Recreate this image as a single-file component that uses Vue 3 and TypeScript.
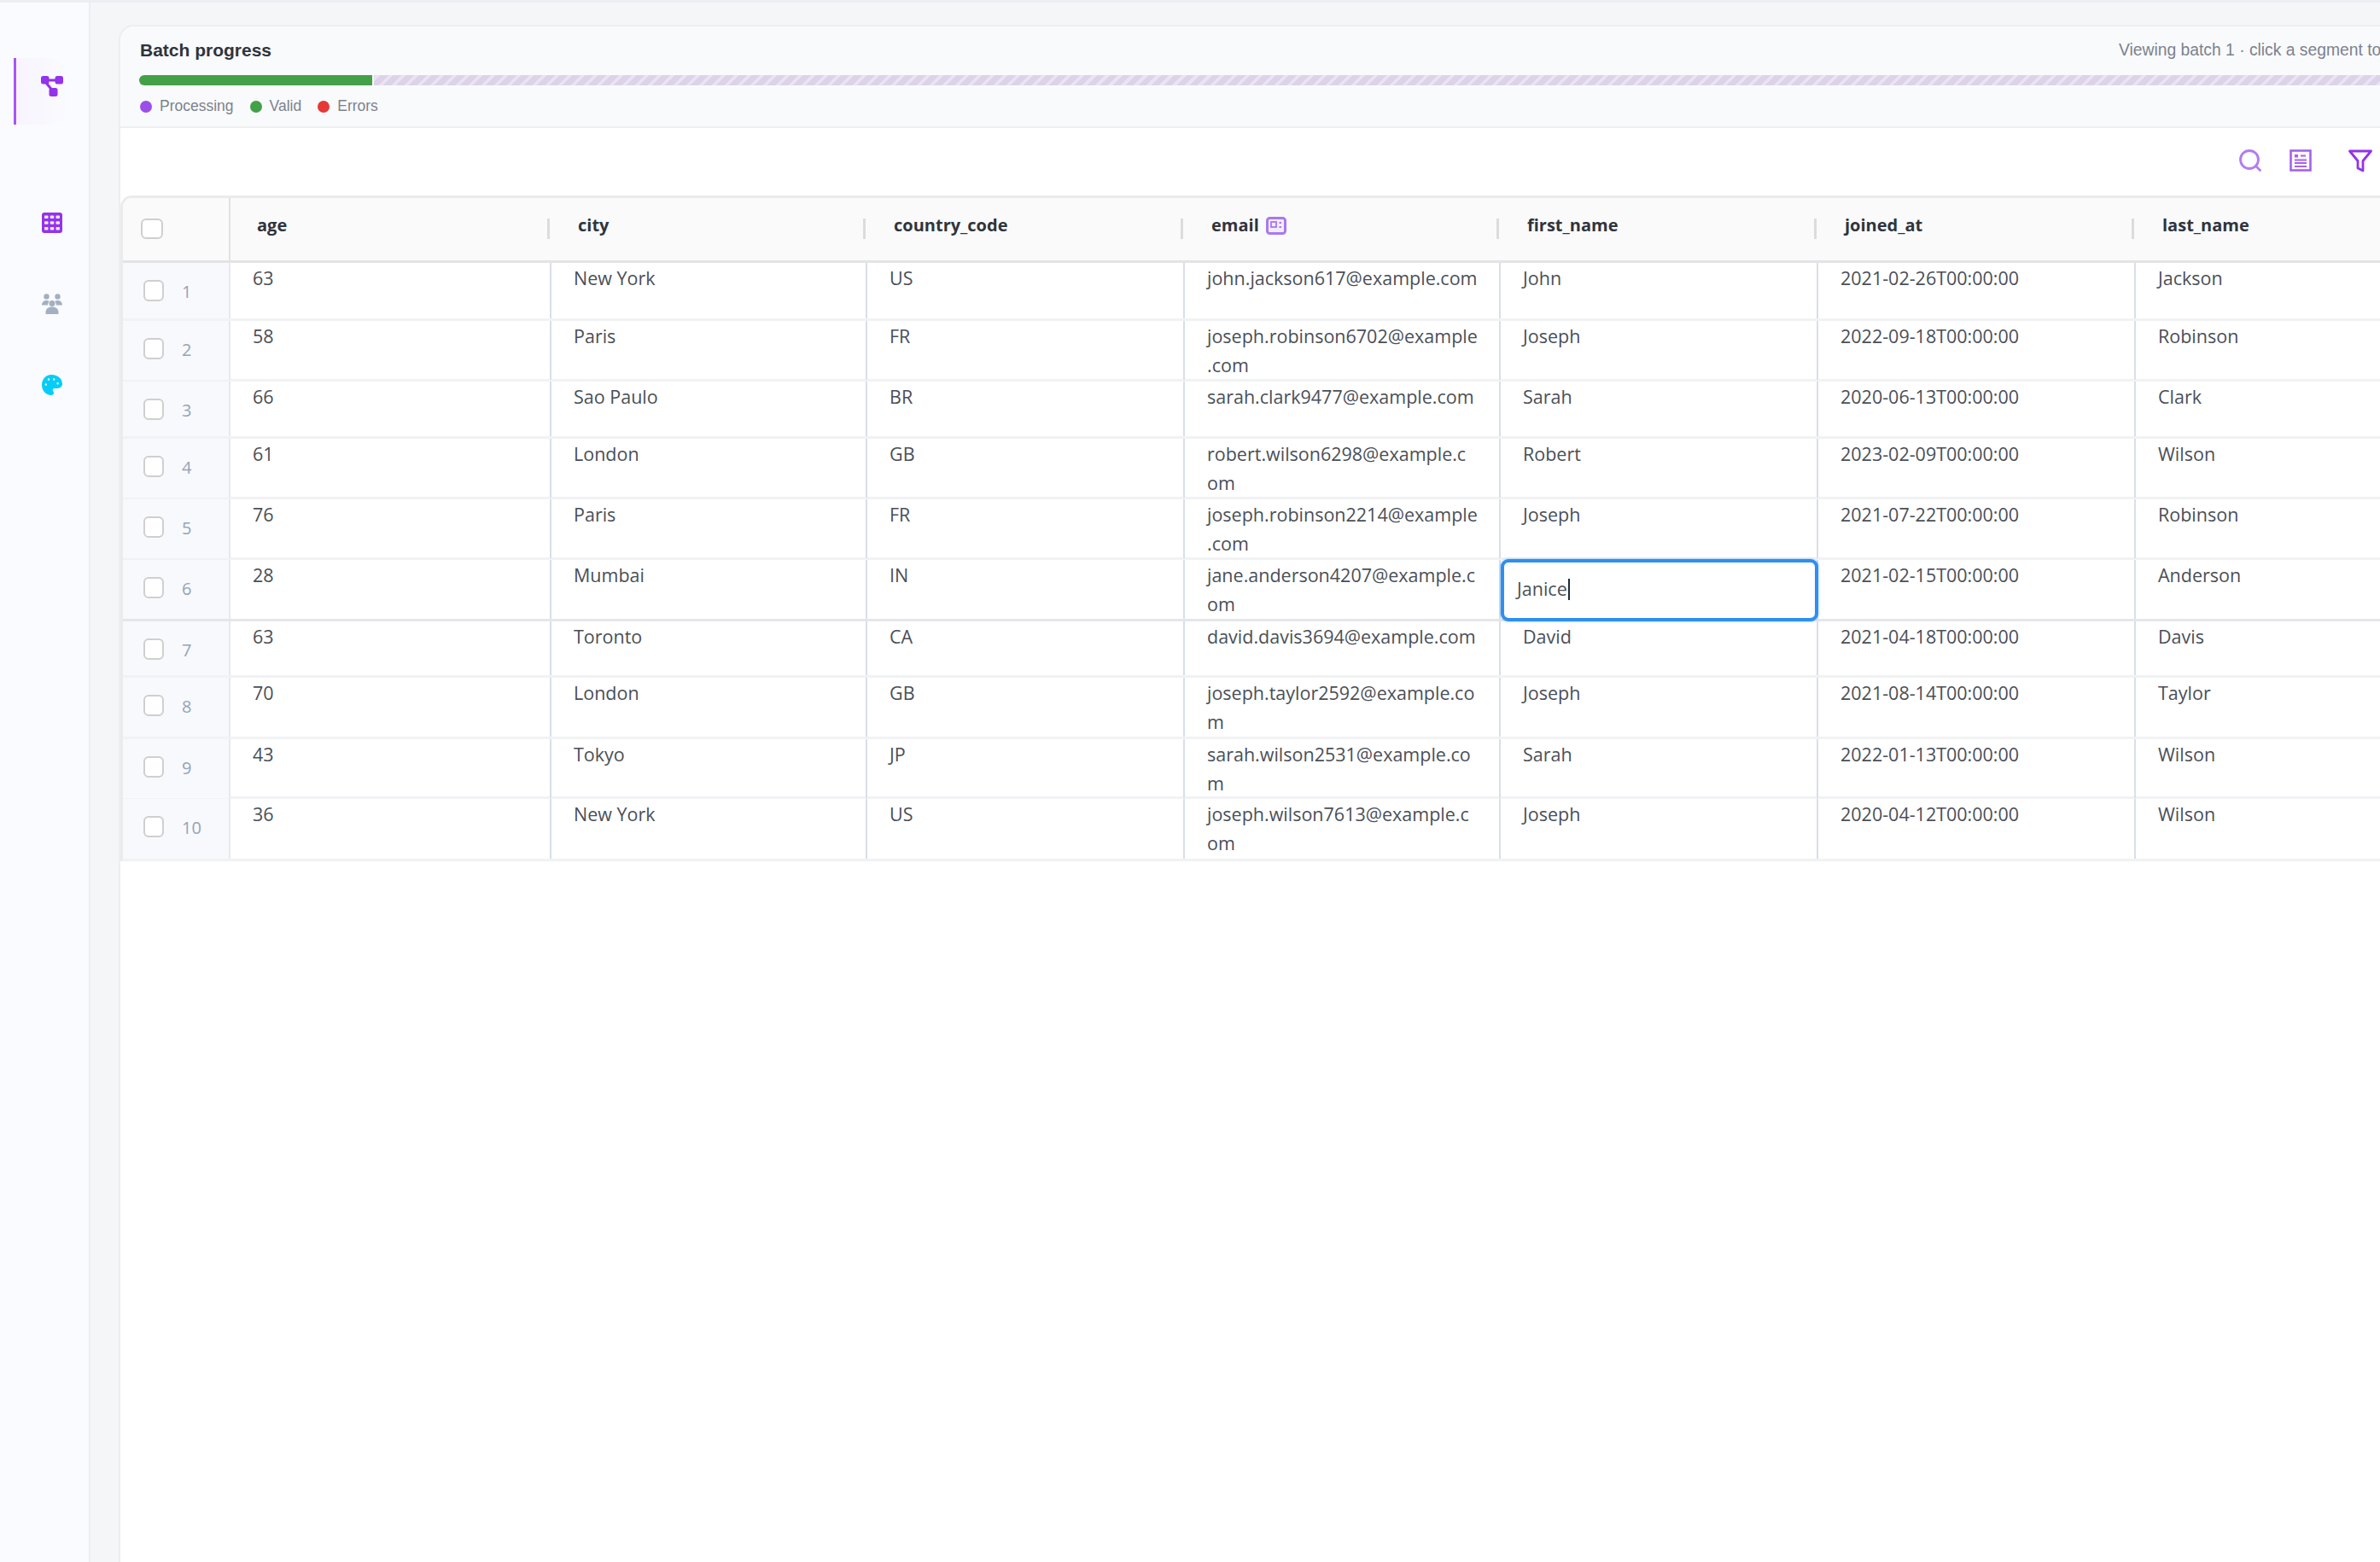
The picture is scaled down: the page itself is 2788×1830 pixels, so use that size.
<template>
  <div class="app">
    <aside class="sidebar">
      <div class="nav-item nav-item--active">
        <svg class="nav-icon" viewBox="0 0 26 24">
          <path d="M8 5h10M6 8l6.500 8" stroke="#9333ea" stroke-width="3" fill="none" />
          <rect x="0" y="0" width="9.500" height="9.500" rx="2.500" fill="#9333ea" />
          <rect x="16.500" y="0" width="9.500" height="9.500" rx="2.500" fill="#9333ea" />
          <rect x="9.500" y="14" width="10" height="10" rx="2.500" fill="#9333ea" />
        </svg>
      </div>
      <div class="nav-group">
        <svg class="nav-icon" viewBox="0 0 24 24">
          <rect x="0" y="0" width="24" height="24" rx="3" fill="#9333ea" />
          <g fill="#f3e8ff">
            <rect v-for="c in gridCells" :key="c.x + '-' + c.y" :x="c.x" :y="c.y" width="4.500" height="3.600" rx="1" />
          </g>
        </svg>
        <svg class="nav-icon" viewBox="0 0 24 24" fill="#a3afc2">
          <circle cx="5.500" cy="3.500" r="3.200" />
          <circle cx="18.500" cy="3.500" r="3.200" />
          <path d="M0 13.500c0-3.500 2.500-5.500 5.500-5.500 1.400 0 2.500.4 3.300 1.100-1 1-1.700 2.600-1.700 4.400H0z" />
          <path d="M24 13.500c0-3.500-2.500-5.500-5.500-5.500-1.400 0-2.500.4-3.300 1.100 1 1 1.700 2.600 1.700 4.400H24z" />
          <circle cx="12" cy="11.500" r="3.500" />
          <path d="M4.500 24v-2.500c0-3.800 3.500-6 7.500-6s7.500 2.200 7.500 6V24H4.500z" />
        </svg>
        <svg class="nav-icon" viewBox="0 0 24 24">
          <path fill-rule="evenodd" d="M11 0C4.900 0 0 5.200 0 12s4.900 12 11 12c1.800 0 3-1.200 3-2.800 0-.8-.3-1.400-.7-1.900-.4-.5-.6-1-.6-1.500 0-1.100.9-1.800 2-1.800h3.300c3.300 0 6-2.300 6-5C24 4.300 18.200 0 11 0zM4.800 12.700a1.200 1.200 0 1 1 0-2.400 1.200 1.200 0 0 1 0 2.400zM8 6.700a1.200 1.200 0 1 1 0-2.400 1.200 1.200 0 0 1 0 2.400zm6.200 0a1.200 1.200 0 1 1 0-2.400 1.200 1.200 0 0 1 0 2.400zm4.400 4.800a1.200 1.200 0 1 1 0-2.400 1.200 1.200 0 0 1 0 2.400z" fill="#06cdf8" />
        </svg>
      </div>
    </aside>

    <main class="main">
      <section class="card">
        <header class="batch">
          <div class="batch__top">
            <h2 class="batch__title">Batch progress</h2>
            <span class="batch__hint">Viewing batch 1 · click a segment to view</span>
          </div>
          <div class="bar">
            <div class="bar__valid"></div>
            <div class="bar__rest"></div>
          </div>
          <div class="legend">
            <span v-for="item in legend" :key="item.label" class="legend__item">
              <i class="legend__dot" :style="{ background: item.color }"></i>
              {{ item.label }}
            </span>
          </div>
        </header>

        <div class="toolbar">
          <svg class="tool tool--search" viewBox="0 0 26 26" fill="none" stroke="#b57bee" stroke-width="2.800">
            <circle cx="12" cy="12" r="10.500" />
            <path d="M19.500 19.500l5 5" stroke-linecap="round" />
          </svg>
          <svg class="tool tool--form" viewBox="0 0 26 26" fill="none" stroke="#a463ea" stroke-width="2.600">
            <rect x="1.500" y="1.500" width="23" height="23" fill="#fbf8ff" />
            <rect x="6" y="6" width="4" height="3.500" fill="#a463ea" stroke="none" />
            <path d="M13 7.500h6M6 12.500h14M6 16h14M6 20h14" stroke-width="2" />
          </svg>
          <svg class="tool tool--filter" viewBox="0 0 28 27" fill="none" stroke="#9333ea" stroke-width="2.800" stroke-linejoin="round">
            <path d="M1.500 2h25l-9.500 11.500v11.500l-6-3v-8.500z" />
          </svg>
        </div>

        <div class="table">
          <div class="row row--head">
            <div class="cell cell--select">
              <span class="check check--head"></span>
            </div>
            <div v-for="col in columns" :key="col" class="cell cell--head">
              <span>{{ col }}</span>
              <svg v-if="col === 'email'" class="pii" viewBox="0 0 24 21" fill="none">
                <rect x="1.500" y="1.500" width="21" height="18" rx="3" fill="#f3ecfe" stroke="#a779f0" stroke-width="3" />
                <rect x="6" y="6" width="6" height="6" stroke="#a779f0" stroke-width="1.800" />
                <path d="M15.500 7h2.500M15.500 12h2.500" stroke="#a779f0" stroke-width="1.800" />
              </svg>
            </div>
          </div>

          <div
            v-for="row in rows"
            :key="row.id"
            class="row"
            :class="{ 'row--editing': row.id === editingId }"
            :style="{ height: row.height + 'px' }"
          >
            <div class="cell cell--select">
              <span class="check"></span>
              <span class="row-num">{{ row.id }}</span>
            </div>
            <div v-for="col in columns" :key="col" class="cell">
              <div v-if="row.id === editingId && col === 'first_name'" class="editor">
                {{ row.first_name }}<i class="editor__caret"></i>
              </div>
              <template v-else>{{ row[col] }}</template>
            </div>
          </div>
        </div>
      </section>
    </main>
  </div>
</template>

<script setup lang="ts">
interface Person {
  id: number
  height: number
  age: number
  city: string
  country_code: string
  email: string
  first_name: string
  joined_at: string
  last_name: string
}

type ColumnKey = Exclude<keyof Person, 'id' | 'height'>

const columns: ColumnKey[] = ['age', 'city', 'country_code', 'email', 'first_name', 'joined_at', 'last_name']

const legend = [
  { label: 'Processing', color: '#9c4fe8' },
  { label: 'Valid', color: '#43a047' },
  { label: 'Errors', color: '#e53935' }
]

const gridCells: { x: number; y: number }[] = []
for (const y of [3.500, 10.200, 17]) {
  for (const x of [3, 9.750, 16.500]) {
    gridCells.push({ x, y })
  }
}

const editingId = 6

// emails keep the line breaks of the narrow column
const rows: Person[] = [
  { id: 1, height: 68, age: 63, city: 'New York', country_code: 'US', email: 'john.jackson617@example.com', first_name: 'John', joined_at: '2021-02-26T00:00:00', last_name: 'Jackson' },
  { id: 2, height: 71, age: 58, city: 'Paris', country_code: 'FR', email: 'joseph.robinson6702@example\n.com', first_name: 'Joseph', joined_at: '2022-09-18T00:00:00', last_name: 'Robinson' },
  { id: 3, height: 67, age: 66, city: 'Sao Paulo', country_code: 'BR', email: 'sarah.clark9477@example.com', first_name: 'Sarah', joined_at: '2020-06-13T00:00:00', last_name: 'Clark' },
  { id: 4, height: 71, age: 61, city: 'London', country_code: 'GB', email: 'robert.wilson6298@example.c\nom', first_name: 'Robert', joined_at: '2023-02-09T00:00:00', last_name: 'Wilson' },
  { id: 5, height: 71, age: 76, city: 'Paris', country_code: 'FR', email: 'joseph.robinson2214@example\n.com', first_name: 'Joseph', joined_at: '2021-07-22T00:00:00', last_name: 'Robinson' },
  { id: 6, height: 72, age: 28, city: 'Mumbai', country_code: 'IN', email: 'jane.anderson4207@example.c\nom', first_name: 'Janice', joined_at: '2021-02-15T00:00:00', last_name: 'Anderson' },
  { id: 7, height: 66, age: 63, city: 'Toronto', country_code: 'CA', email: 'david.davis3694@example.com', first_name: 'David', joined_at: '2021-04-18T00:00:00', last_name: 'Davis' },
  { id: 8, height: 72, age: 70, city: 'London', country_code: 'GB', email: 'joseph.taylor2592@example.co\nm', first_name: 'Joseph', joined_at: '2021-08-14T00:00:00', last_name: 'Taylor' },
  { id: 9, height: 70, age: 43, city: 'Tokyo', country_code: 'JP', email: 'sarah.wilson2531@example.co\nm', first_name: 'Sarah', joined_at: '2022-01-13T00:00:00', last_name: 'Wilson' },
  { id: 10, height: 73, age: 36, city: 'New York', country_code: 'US', email: 'joseph.wilson7613@example.c\nom', first_name: 'Joseph', joined_at: '2020-04-12T00:00:00', last_name: 'Wilson' }
]
</script>

<style>
html,
body {
  margin: 0;
  overflow: hidden;
  background: #f5f6f8;
}
</style>

<style scoped>
.app {
  display: flex;
  width: 2788px;
  height: 1830px;
  overflow: hidden;
  box-sizing: border-box;
  border-top: 3px solid #eceef1;
  font-family: "Open Sans", "Liberation Sans", sans-serif;
}

.sidebar {
  flex: 0 0 106px;
  box-sizing: border-box;
  padding-top: 65px;
  background: #fafbfe;
  border-right: 2px solid #ebedf1;
}

.nav-item {
  box-sizing: border-box;
  margin-left: 16px;
  width: 60px;
  height: 78px;
  padding: 21px 0 0 32px;
}

.nav-item--active {
  border-left: 3px solid #a855f7;
  border-radius: 0 18px 18px 0;
  background: linear-gradient(to right, #f8f4fe, #fafafe);
  padding-left: 29px;
}

.nav-icon {
  display: block;
  width: 26px;
  height: 24px;
}

.nav-group {
  display: flex;
  flex-direction: column;
  gap: 71px;
  margin: 103px 0 0 48px;
}

.main {
  flex: 1;
  min-width: 0;
  padding: 26px 0 0 33px;
  background: #f5f6f8;
}

.card {
  box-sizing: border-box;
  width: 2733px;
  height: 1830px;
  background: #fff;
  border: 2px solid #eceef1;
  border-right: none;
  border-radius: 18px 0 0 0;
  overflow: hidden;
}

.batch {
  box-sizing: border-box;
  height: 119px;
  padding: 12px 0 0 23px;
  background: #f9fafc;
  border-bottom: 2px solid #eceef1;
  font-family: "Liberation Sans", Arial, sans-serif;
}

.batch__top {
  display: flex;
  justify-content: space-between;
  align-items: center;
  height: 32px;
}

.batch__title {
  margin: 0;
  font-size: 21px;
  font-weight: 700;
  color: #2f343d;
}

.batch__hint {
  flex: none;
  width: 390px;
  font-size: 19.300px;
  color: #7c828d;
  white-space: nowrap;
}

.bar {
  display: flex;
  height: 12px;
  margin-top: 13px;
  margin-left: -1px;
  border-radius: 6px 0 0 6px;
  overflow: hidden;
}

.bar__valid {
  flex: 0 0 273px;
  background: #43a047;
}

.bar__rest {
  flex: 1;
  margin-left: 2px;
  background: repeating-linear-gradient(
    -45deg,
    #dcd3e9 0 7px,
    #e9e4f1 7px 10.600px
  );
}

.legend {
  display: flex;
  gap: 19px;
  margin-top: 14px;
  font-size: 17.500px;
  color: #7c828d;
}

.legend__item {
  display: flex;
  align-items: center;
  gap: 9px;
}

.legend__dot {
  width: 14px;
  height: 14px;
  border-radius: 50%;
}

.toolbar {
  display: flex;
  justify-content: flex-end;
  align-items: flex-start;
  box-sizing: border-box;
  height: 79px;
  padding: 25px 93px 0 0;
  background: #fff;
}

.tool {
  display: block;
  width: 26px;
  height: 26px;
}

.tool--form {
  margin: 0 43px 0 33px;
}

.tool--filter {
  width: 28px;
  height: 27px;
}

.table {
  border-top: 3px solid #ebebeb;
  border-left: 3px solid #ebebeb;
  border-radius: 14px 0 0 0;
  overflow: hidden;
}

.row {
  display: grid;
  grid-template-columns: 126px 376px 370px 372px 370px 372px 372px 372px;
  box-sizing: border-box;
  border-bottom: 3px solid #f1f2f4;
  font-size: 21.500px;
  line-height: 34px;
  color: #4a4f58;
}

.row--editing {
  border-bottom-color: #e4e6ea;
}

.row--head {
  height: 76px;
  background: #fafafa;
  border-bottom-color: #e3e3e3;
  font-size: 20px;
  font-weight: 700;
  color: #2f343d;
}

.cell {
  position: relative;
  box-sizing: border-box;
  padding: 1px 4px 0 26px;
  border-right: 2px solid #d9deea;
  white-space: pre-line;
}

.cell--select {
  display: flex;
  align-items: flex-start;
  padding: 20px 0 0 24px;
  background: #f8f9fc;
  border-right-color: #e6e9f0;
}

.cell--head {
  display: flex;
  align-items: center;
  gap: 8px;
  padding: 0 0 9px 31px;
  border-right: none;
}

.cell--head::after {
  content: "";
  position: absolute;
  right: 2px;
  top: 24px;
  width: 3px;
  height: 24px;
  background: #dcdcdc;
}

.row--head .cell--select {
  background: #fafafa;
  border-right: 2px solid #e2e2e2;
  padding: 24px 0 0 21px;
}

.check {
  display: block;
  flex: none;
  box-sizing: border-box;
  width: 24px;
  height: 25px;
  background: #fff;
  border: 2px solid #cfcfcf;
  border-radius: 6px;
}

.check--head {
  width: 26px;
  height: 24px;
}

.row-num {
  margin: -3px 0 0 21px;
  font-size: 20px;
  color: #94a3b8;
}

.pii {
  width: 24px;
  height: 21px;
}

.editor {
  position: absolute;
  left: 0;
  top: -1px;
  right: -2px;
  bottom: -3px;
  box-sizing: border-box;
  padding: 14px 0 0 15px;
  background: #fff;
  border: 4px solid #2f8fef;
  border-radius: 9px;
  box-shadow: 0 0 3px rgba(47, 143, 239, 0.6);
}

.editor__caret {
  display: inline-block;
  width: 2px;
  height: 25px;
  margin-left: 1px;
  vertical-align: -5px;
  background: #1f2937;
}
</style>
